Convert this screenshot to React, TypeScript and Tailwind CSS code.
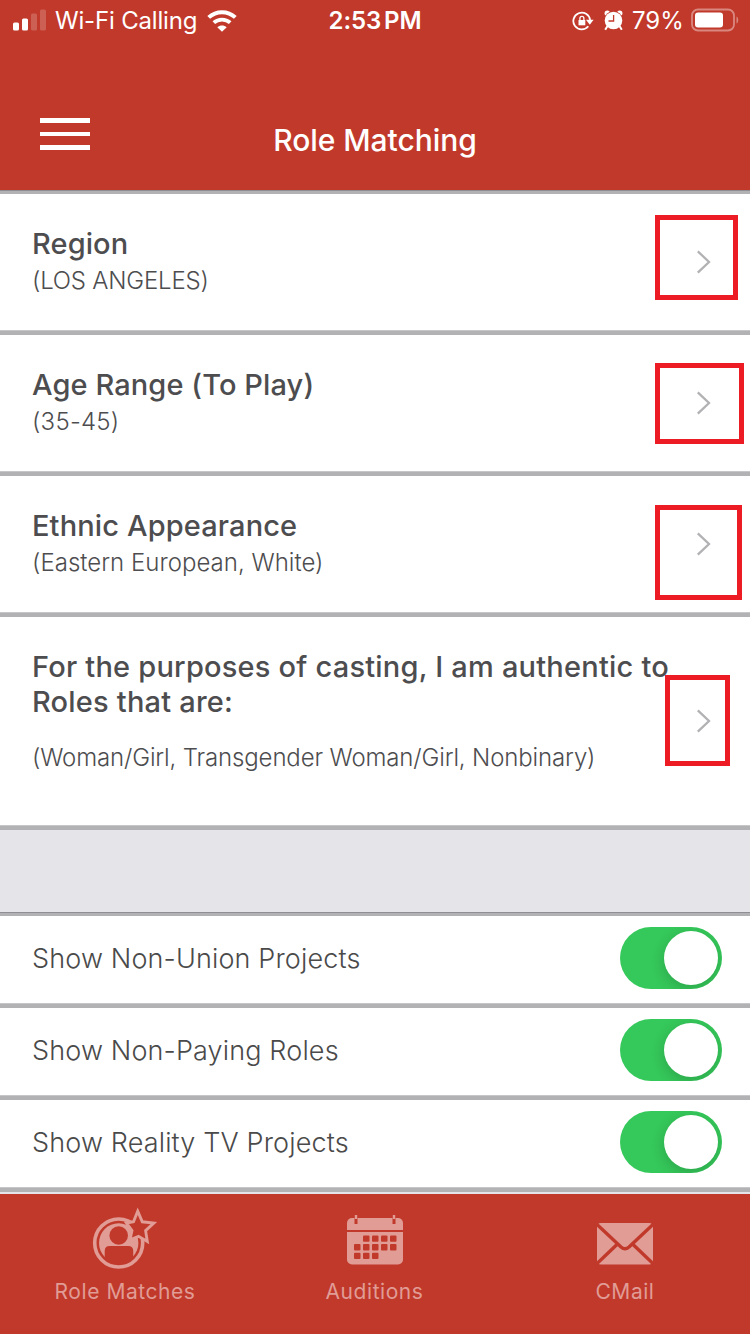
import { useState } from "react";

interface Setting {
  id: string;
  title: string;
  value: string;
  rowClass: string;
  titleClass: string;
  valueClass: string;
  boxClass: string;
}

interface Filter {
  id: string;
  label: string;
}

const SETTINGS: Setting[] = [
  {
    id: "region",
    title: "Region",
    value: "(LOS ANGELES)",
    rowClass: "h-[136px]",
    titleClass: "tracking-[0.1px]",
    valueClass: "tracking-[-0.2px]",
    boxClass: "-left-[42px] top-[21px] h-[85px] w-[83px]",
  },
  {
    id: "age",
    title: "Age Range (To Play)",
    value: "(35-45)",
    rowClass: "h-[136px]",
    titleClass: "tracking-[0.1px]",
    valueClass: "tracking-[0.25px]",
    boxClass: "-left-[42px] top-[28px] h-[81px] w-[89px]",
  },
  {
    id: "ethnic",
    title: "Ethnic Appearance",
    value: "(Eastern European, White)",
    rowClass: "h-[136px]",
    titleClass: "tracking-[0.13px]",
    valueClass: "tracking-[0.02px]",
    boxClass: "-left-[42px] top-[29px] h-[95px] w-[87px]",
  },
  {
    id: "identity",
    title: "For the purposes of casting, I am authentic to Roles that are:",
    value: "(Woman/Girl, Transgender Woman/Girl, Nonbinary)",
    rowClass: "h-[208px]",
    titleClass: "tracking-[0.21px]",
    valueClass: "mt-[19px] tracking-[-0.14px]",
    boxClass: "-left-[32px] top-[58px] h-[91px] w-[65px]",
  },
];

const FILTERS: Filter[] = [
  { id: "union", label: "Show Non-Union Projects" },
  { id: "paying", label: "Show Non-Paying Roles" },
  { id: "reality", label: "Show Reality TV Projects" },
];

function StatusBar() {
  return (
    <div className="grid h-[42px] grid-cols-3 items-center text-[24px] leading-10">
      <div className="flex items-center pl-[13px]">
        <svg width="33" height="22" viewBox="0 0 33 22" fill="#fff" className="-mt-[2px] shrink-0">
          <rect x="0" y="13.500" width="6" height="8" rx="1.500" />
          <rect x="9" y="9.500" width="6" height="12" rx="1.500" />
          <rect x="18" y="4.500" width="6" height="17" rx="1.500" opacity=".2" />
          <rect x="27" y=".5" width="6" height="21" rx="1.500" opacity=".2" />
        </svg>
        <span className="ml-[9px] w-[144px] shrink-0 whitespace-nowrap tracking-[-0.18px]">Wi-Fi Calling</span>
        <svg width="30" height="22" viewBox="0 0 30 22" className="ml-[8px] -mt-[1px] shrink-0" fill="none" stroke="#fff" strokeWidth="4">
          <path d="M1.700 7.400C9.200.4 20.800.4 28.300 7.400" />
          <path d="M6.800 12.700C11.500 8.500 18.500 8.500 23.200 12.700" strokeWidth="3.800" />
          <path d="M10.300 17.200C13 14.900 17 14.900 19.700 17.200L15 21.800Z" fill="#fff" stroke="none" />
        </svg>
      </div>
      <div className="text-center font-semibold tracking-[-0.1px] [word-spacing:-3px]">2:53 PM</div>
      <div className="flex items-center justify-end pr-[11px]">
        <svg width="22" height="20" viewBox="0 0 22 20" className="-mr-px shrink-0" fill="none" stroke="#fff" strokeWidth="1.800">
          <path d="M16.300 15.300A8.400 8.400 0 1 1 18.100 9" />
          <path d="M14 8.800H21.600L17.800 13.800Z" fill="#fff" stroke="none" />
          <path d="M6.500 9H13.300V14.300H6.500Z" fill="#fff" stroke="none" />
          <path d="M7.900 9.500V7.400a2 2 0 0 1 4 0V9.500" strokeWidth="1.300" />
        </svg>
        <svg width="19" height="21" viewBox="0 0 19 21" className="ml-[11px] -mt-[1px] shrink-0" fill="#fff">
          <circle cx="3.300" cy="3.200" r="2.700" />
          <circle cx="15.700" cy="3.200" r="2.700" />
          <circle cx="9.500" cy="10.500" r="9.500" fill="#c1392b" />
          <circle cx="9.500" cy="10.500" r="8.800" />
          <path d="M3.500 16L1.200 19.800M15.500 16l2.300 3.800" stroke="#fff" strokeWidth="2" />
          <path d="M9.600 5V11H4.500" fill="none" stroke="#c1392b" strokeWidth="1.300" />
        </svg>
        <span className="ml-[9px] w-[51px] shrink-0 whitespace-nowrap">79%</span>
        <svg width="48" height="24" viewBox="0 0 48 24" className="ml-[8px] -mt-[2px] shrink-0">
          <rect x="1" y="1.500" width="42" height="21" rx="6" fill="none" stroke="#fff" strokeWidth="1.800" opacity=".4" />
          <rect x="4" y="4.500" width="28" height="15" rx="3" fill="#fff" />
          <path d="M45.500 8.500c2.300 1 2.300 6 0 7z" fill="#fff" opacity=".4" />
        </svg>
      </div>
    </div>
  );
}

function Header() {
  return (
    <header className="h-[190px] bg-[#c1392b] text-white">
      <StatusBar />
      <div className="grid grid-cols-[1fr_auto_1fr] px-10 pt-[73px]">
        <button aria-label="Menu" className="mt-[3px] flex h-8 w-[50px] flex-col justify-between">
          <span className="h-[5px] bg-white" />
          <span className="h-[4px] bg-white" />
          <span className="h-[5px] bg-white" />
        </button>
        <h1 className="h-[52px] text-[30px] leading-[51px] font-medium tracking-[-0.05px]">Role Matching</h1>
      </div>
    </header>
  );
}

function SettingRow({ item }: { item: Setting }) {
  return (
    <li
      className={`box-content flex border-b-4 border-[#b2b2b4] pb-px pl-8 shadow-[inset_0_-1px_#c6c6c8] ${item.rowClass}`}
    >
      <div className="w-[665px] shrink-0 pt-8 text-[#4d4d4f]">
        <h2 className={`w-[650px] text-[29px] leading-[35px] font-medium ${item.titleClass}`}>{item.title}</h2>
        <p className={`pt-[5px] text-[24px] leading-[30px] font-light whitespace-nowrap ${item.valueClass}`}>
          {item.value}
        </p>
      </div>
      <div className="relative flex w-[14px] items-center">
        <svg width="14" height="24" viewBox="0 0 14 24" fill="none" stroke="#b2b2b4" strokeWidth="2.300" className="shrink-0">
          <path d="M.8 1.300L12 12L.8 22.700" />
        </svg>
        <span className={`absolute border-[5px] border-[#ed1c24] ${item.boxClass}`} />
      </div>
    </li>
  );
}

function FilterRow({ label }: { label: string }) {
  const [on, setOn] = useState(true);
  return (
    <li className="box-content flex h-[87px] items-center border-b-4 border-[#b2b2b4] pb-px shadow-[inset_0_-1px_#c6c6c8]">
      <span className="-mt-[2px] flex-1 pl-8 text-[27px] leading-[34px] font-light tracking-[0.14px] text-[#4a4a4a]">
        {label}
      </span>
      <button
        role="switch"
        aria-checked={on}
        aria-label={label}
        onClick={() => setOn(!on)}
        className={`-mt-[3px] mr-7 flex h-[62px] w-[102px] items-center overflow-hidden rounded-full p-1 ${
          on ? "justify-end bg-[#35c85a]" : "justify-start bg-[#e9e9ea]"
        }`}
      >
        <span className="size-[54px] rounded-full bg-white shadow-[0_4px_14px_rgba(0,0,0,0.18)]" />
      </button>
    </li>
  );
}

function MatchesIcon() {
  return (
    <svg width="66" height="64" viewBox="0 0 66 64">
      <circle cx="26.700" cy="36" r="19.700" fill="#e09c95" />
      <circle cx="26.700" cy="28.500" r="9.300" fill="#c1392b" />
      <path d="M12.700 57V44q0-5 5-5H36.200q5 0 5 5V57Z" fill="#c1392b" />
      <circle cx="26.700" cy="36" r="24" fill="none" stroke="#e09c95" strokeWidth="3.600" />
      <path
        d="M45.700 4.200L50.300 14.800L61.800 16L53.600 23.600L55.300 34.500L46.500 29.300L38 32.800L40 23.500L34.500 16L41.500 14.800Z"
        fill="#c1392b"
        stroke="#e09c95"
        strokeWidth="2.900"
      />
    </svg>
  );
}

function CalendarIcon() {
  const cells = [
    [1, 2, 3, 4],
    [0, 1, 2, 3, 4],
    [0, 1, 2],
  ];
  return (
    <svg width="56" height="50" viewBox="0 0 56 50">
      <rect y="3" width="56" height="46.500" rx="5" fill="#e09c95" />
      <path d="M0 16H56" stroke="#c1392b" strokeWidth="2" />
      {[9, 47].map((x) => (
        <g key={x}>
          <rect x={x - 1.5} y="1.500" width="3" height="7.500" fill="#c1392b" />
          <rect x={x - 1.2} y="0" width="2.400" height="4" fill="#e09c95" />
        </g>
      ))}
      {cells.map((row, y) =>
        row.map((x) => (
          <rect key={`${x}-${y}`} x={7 + x * 9} y={20.5 + y * 8.6} width="6.500" height="6.300" rx="1" fill="#c1392b" />
        ))
      )}
    </svg>
  );
}

function MailIcon() {
  return (
    <svg width="56" height="42" viewBox="0 0 56 42">
      <rect width="56" height="41.500" rx="4" fill="#e09c95" />
      <path d="M0 1.500L24 24Q28 27.500 32 24L56 1.500" fill="none" stroke="#c1392b" strokeWidth="3.400" />
      <path d="M0 40.500L20.500 21M56 40.500L35.500 21" stroke="#c1392b" strokeWidth="3.400" />
    </svg>
  );
}

function TabBar() {
  return (
    <nav className="grid h-[140px] grid-cols-3 bg-[#c1392b] text-[21px] leading-[31px] tracking-[0.55px] text-[#e09c95]">
      <a className="flex flex-col items-center">
        <span className="flex h-[82px] pt-[13px]">
          <MatchesIcon />
        </span>
        <span>Role Matches</span>
      </a>
      <a className="flex flex-col items-center">
        <span className="flex h-[82px] pt-[21px]">
          <CalendarIcon />
        </span>
        <span className="-ml-[1px]">Auditions</span>
      </a>
      <a className="flex flex-col items-center">
        <span className="flex h-[82px] pt-[29px]">
          <MailIcon />
        </span>
        <span>CMail</span>
      </a>
    </nav>
  );
}

export default function App() {
  return (
    <div className="flex h-[1334px] w-[750px] flex-col overflow-hidden bg-white font-['Inter','Liberation_Sans',sans-serif]">
      <Header />
      <main className="h-[1004px] bg-[#e5e4e9]">
        <section className="border-t border-[#8e8e93]">
          <ul className="border-t-[3px] border-[#b2b2b4] bg-white">
            {SETTINGS.map((s) => (
              <SettingRow key={s.id} item={s} />
            ))}
          </ul>
        </section>
        <section className="mt-[82px] border-t border-[#8e8e93]">
          <ul className="border-t-[3px] border-[#b2b2b4] bg-white">
            {FILTERS.map((f) => (
              <FilterRow key={f.id} label={f.label} />
            ))}
          </ul>
        </section>
      </main>
      <TabBar />
    </div>
  );
}
